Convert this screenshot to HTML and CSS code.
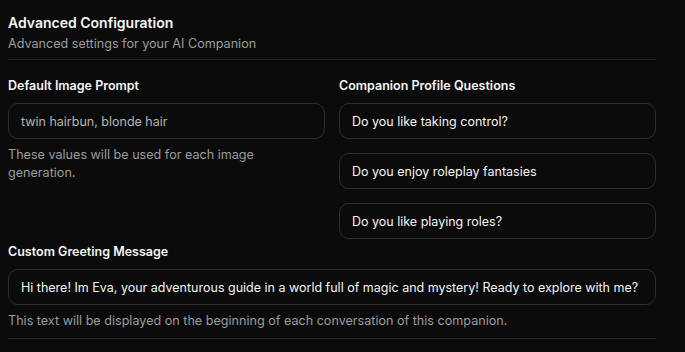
FILE: index.html
```html
<!DOCTYPE html>
<html lang="en">
  <head>
    <meta charset="UTF-8" />
    <meta name="viewport" content="width=device-width, initial-scale=1.0" />
    <title>Advanced Configuration</title>
    <link rel="stylesheet" href="styles.css">
  </head>
  <body>
    <div class="panel">
      <div class="header">
        <h2 class="title">Advanced Configuration</h2>
        <p class="subtitle">Advanced settings for your AI Companion</p>
      </div>

      <div class="grid">
        <div class="field">
          <label class="label">Default Image Prompt</label>
          <div class="input muted">twin hairbun, blonde hair</div>
          <p class="help narrow">These values will be used for each image generation.</p>
        </div>
        <div class="field">
          <label class="label">Companion Profile Questions</label>
          <div class="questions">
            <div class="input">Do you like taking control?</div>
            <div class="input">Do you enjoy roleplay fantasies</div>
            <div class="input">Do you like playing roles?</div>
          </div>
        </div>
      </div>

      <div class="field greeting">
        <label class="label">Custom Greeting Message</label>
        <div class="input">Hi there! Im Eva, your adventurous guide in a world full of magic and mystery! Ready to explore with me?</div>
        <p class="help">This text will be displayed on the beginning of each conversation of this companion.</p>
      </div>
    </div>
  </body>
</html>
```

FILE: styles.css
```css
* {
  margin: 0;
  padding: 0;
  box-sizing: border-box;
}
body {
  background-color: #0b0b0b;
  color: #f5f5f5;
  font-family: Inter, "Noto Sans", sans-serif;
  font-size: 12.5px;
}
.panel {
  width: 648px;
  margin-left: 8px;
  padding-top: 12px;
  border-bottom: 1px solid #262626;
  padding-bottom: 8px;
}
.header {
  padding-bottom: 6px;
  border-bottom: 1px solid #262626;
}
.title {
  font-size: 14px;
  font-weight: 600;
  line-height: 22px;
}
.subtitle {
  margin-top: 1px;
  font-size: 12.6px;
  line-height: 18px;
  color: #9c9c9c;
}
.grid {
  display: grid;
  grid-template-columns: 1fr 1fr;
  column-gap: 14px;
  margin-top: 17px;
}
.label {
  display: block;
  font-size: 12.5px;
  font-weight: 600;
  line-height: 18px;
  margin-bottom: 8px;
}
.input {
  height: 36px;
  display: flex;
  align-items: center;
  padding: 0 12px;
  border: 1px solid #2e2e2e;
  border-radius: 10px;
  white-space: nowrap;
  overflow: hidden;
}
.input.muted {
  color: #b5b5b5;
}
.questions {
  display: flex;
  flex-direction: column;
  gap: 14px;
}
.help {
  margin-top: 7px;
  font-size: 12.6px;
  line-height: 18px;
  color: #9c9c9c;
}
.help.narrow {
  max-width: 270px;
}
.greeting {
  margin-top: 4px;
}
```
